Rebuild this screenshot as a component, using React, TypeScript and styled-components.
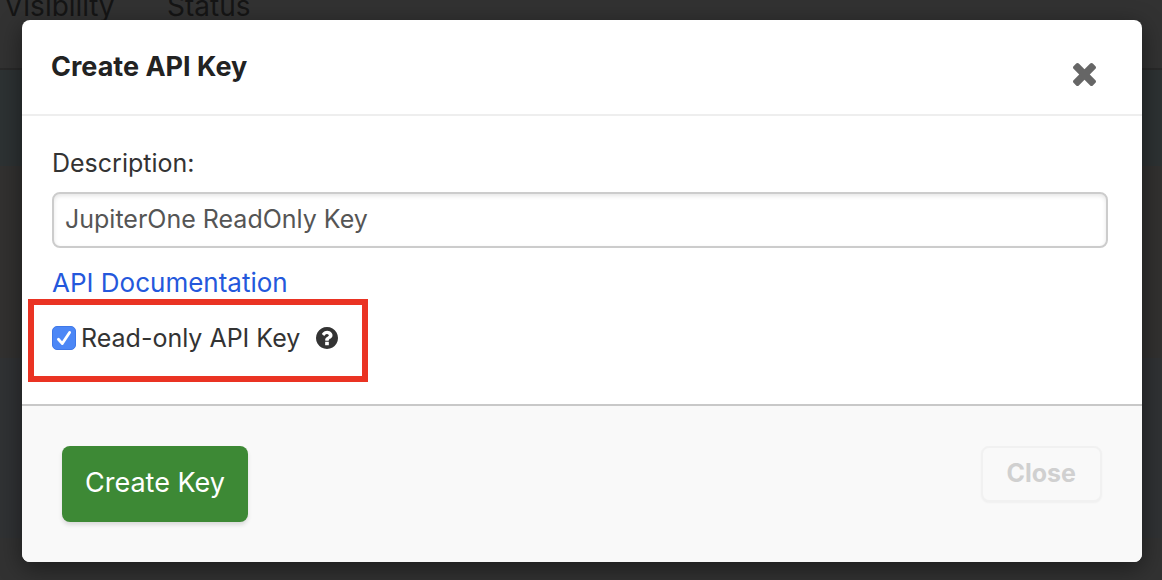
import React, { useState } from "react";
import styled, { createGlobalStyle, css } from "styled-components";

const GlobalStyle = createGlobalStyle`
  *, *::before, *::after { box-sizing: border-box; }
  html, body, #root { height: 100%; }
  body {
    margin: 0;
    overflow: hidden;
    background: #323232;
    color: #333;
    font: 400 25px/34px Inter, Roboto, "Liberation Sans", sans-serif;
  }
  button, input { font: inherit; }
`;

const Screen = styled.div`
  position: relative;
  min-height: 100%;
  overflow: hidden;
`;

const Backdrop = styled.div`
  position: absolute;
  inset: 0;
  overflow: hidden;
`;

const ColumnHeads = styled.div`
  display: grid;
  grid-template-columns: 163px 1fr;
  height: 70px;
  padding-left: 4px;
  border-bottom: 2px solid #292929;
  color: #151515;
  font-size: 28px;
  line-height: 12px;
`;

const Band = styled.div<{ $height: number; $color: string }>`
  height: ${(p) => p.$height}px;
  background: ${(p) => p.$color};
`;

const Dialog = styled.section`
  position: relative;
  margin: 20px 20px 18px 22px;
  border-radius: 8px;
  background: #fff;
  box-shadow: 0 6px 24px rgba(0, 0, 0, 0.45);
`;

const Header = styled.header`
  display: flex;
  align-items: flex-start;
  justify-content: space-between;
  padding: 29px 46px 28px 29px;
  border-bottom: 2px solid #eee;
`;

const Title = styled.h1`
  margin: 0;
  color: #222;
  font-size: 27px;
  line-height: 36px;
  font-weight: 700;
`;

const IconButton = styled.button`
  display: flex;
  margin-top: 14px;
  padding: 0;
  border: 0;
  background: none;
  color: #666;
  cursor: pointer;
`;

const Body = styled.div`
  display: flex;
  flex-direction: column;
  align-items: flex-start;
  padding: 30px 34px 22px 30px;
`;

const TextInput = styled.input`
  width: 100%;
  height: 56px;
  margin: 12px 0 18px;
  padding: 0 12px 2px 11px;
  border: 2px solid #ccc;
  border-radius: 8px;
  outline: 0;
  background: #fff;
  box-shadow: inset 0 2px 4px rgba(0, 0, 0, 0.1);
  color: #555;
`;

const DocLink = styled.a`
  color: #2458dc;
  font-size: 26px;
  text-decoration: none;
`;

const Highlight = styled.div`
  display: flex;
  align-items: center;
  gap: 16px;
  margin: -1px 0 0 -24px;
  padding: 16px 24px 21px 18px;
  border: 6px solid #ea3323;
`;

const CheckLabel = styled.label`
  display: flex;
  align-items: center;
  gap: 5px;
`;

const CheckMark = styled.span`
  display: grid;
  width: 24px;
  height: 24px;
  > * { grid-area: 1 / 1; }
  svg { pointer-events: none; }
`;

const CheckBox = styled.input`
  appearance: none;
  width: 24px;
  height: 24px;
  margin: 0;
  border: 1px solid #3f78e8;
  border-radius: 5px;
  background: #fff;
  &:checked { background: #4c87f6; }
  &:not(:checked) + svg { visibility: hidden; }
`;

const Footer = styled.footer`
  display: flex;
  align-items: flex-start;
  justify-content: space-between;
  padding: 40px;
  border-top: 2px solid #c8c8c8;
  border-radius: 0 0 8px 8px;
  background: #f9f9f9;
`;

const Button = styled.button<{ $primary?: boolean }>`
  border-radius: 8px;
  cursor: pointer;
  ${(p) =>
    p.$primary
      ? css`
          height: 76px;
          padding: 0 23px 2px;
          border: 0;
          background: #3d8935;
          box-shadow: 0 3px 4px rgba(0, 0, 0, 0.12);
          color: #fff;
          font-size: 27px;
        `
      : css`
          height: 56px;
          padding: 0 24px 2px;
          border: 2px solid #f1f1f1;
          background: #f9f9f9;
          box-shadow: 0 1px 2px rgba(0, 0, 0, 0.04);
          color: #d0d0d0;
          font-weight: 700;
        `}
`;

const CloseIcon = () => (
  <svg width="23" height="23" viewBox="302 366 1188 1188" fill="currentColor" aria-hidden="true">
    <path d="M1490 1322q0 40-28 68l-136 136q-28 28-68 28t-68-28l-294-294-294 294q-28 28-68 28t-68-28l-136-136q-28-28-28-68t28-68l294-294-294-294q-28-28-28-68t28-68l136-136q28-28 68-28t68 28l294 294 294-294q28-28 68-28t68 28l136 136q28 28 28 68t-28 68l-294 294 294 294q28 28 28 68z" />
  </svg>
);

const HelpIcon = () => (
  <svg width="22" height="22" viewBox="128 128 1536 1536" fill="#333" role="img" aria-label="Help">
    <path d="M1024 1376v-192q0-14-9-23t-23-9h-192q-14 0-23 9t-9 23v192q0 14 9 23t23 9h192q14 0 23-9t9-23zm256-672q0-88-55.5-163t-138.5-116-170-41q-243 0-371 213-15 24 8 42l132 100q7 6 19 6 16 0 25-12 53-68 86-92 34-24 86-24 48 0 85.5 26t37.5 59q0 38-20 61t-68 45q-63 28-115.5 86.5t-52.5 125.5v36q0 14 9 23t23 9h192q14 0 23-9t9-23q0-19 21.5-49.5t54.5-49.5q32-18 49-28.5t46-35 44.5-48 28-60.5 12.5-81zm384 192q0 209-103 385.5t-279.5 279.5-385.5 103-385.5-103-279.5-279.5-103-385.5 103-385.5 279.5-279.5 385.5-103 385.5 103 279.5 279.5 103 385.5z" />
  </svg>
);

const TickIcon = () => (
  <svg width="24" height="24" viewBox="0 0 24 24" fill="none" stroke="#fff" strokeWidth="2.8" strokeLinecap="round" strokeLinejoin="round" aria-hidden="true">
    <path d="M6.4 13.2 L10.3 17.6 L17.6 6.4" />
  </svg>
);

export default function App() {
  const [description, setDescription] = useState("JupiterOne ReadOnly Key");
  const [readOnly, setReadOnly] = useState(true);

  return (
    <Screen>
      <GlobalStyle />
      <Backdrop aria-hidden="true">
        <ColumnHeads>
          <span>Visibility</span>
          <span>Status</span>
        </ColumnHeads>
        <Band $height={96} $color="#2d3233" />
        <Band $height={192} $color="#323130" />
        <Band $height={180} $color="#303234" />
      </Backdrop>
      <Dialog role="dialog" aria-labelledby="dialog-title">
        <Header>
          <Title id="dialog-title">Create API Key</Title>
          <IconButton type="button" aria-label="Dismiss">
            <CloseIcon />
          </IconButton>
        </Header>
        <Body>
          <label htmlFor="description">Description:</label>
          <TextInput
            id="description"
            type="text"
            value={description}
            onChange={(e) => setDescription(e.target.value)}
          />
          <DocLink href="#api-documentation">API Documentation</DocLink>
          <Highlight>
            <CheckLabel>
              <CheckMark>
                <CheckBox
                  type="checkbox"
                  checked={readOnly}
                  onChange={(e) => setReadOnly(e.target.checked)}
                />
                <TickIcon />
              </CheckMark>
              Read-only API Key
            </CheckLabel>
            <HelpIcon />
          </Highlight>
        </Body>
        <Footer>
          <Button type="button" $primary>Create Key</Button>
          <Button type="button">Close</Button>
        </Footer>
      </Dialog>
    </Screen>
  );
}
